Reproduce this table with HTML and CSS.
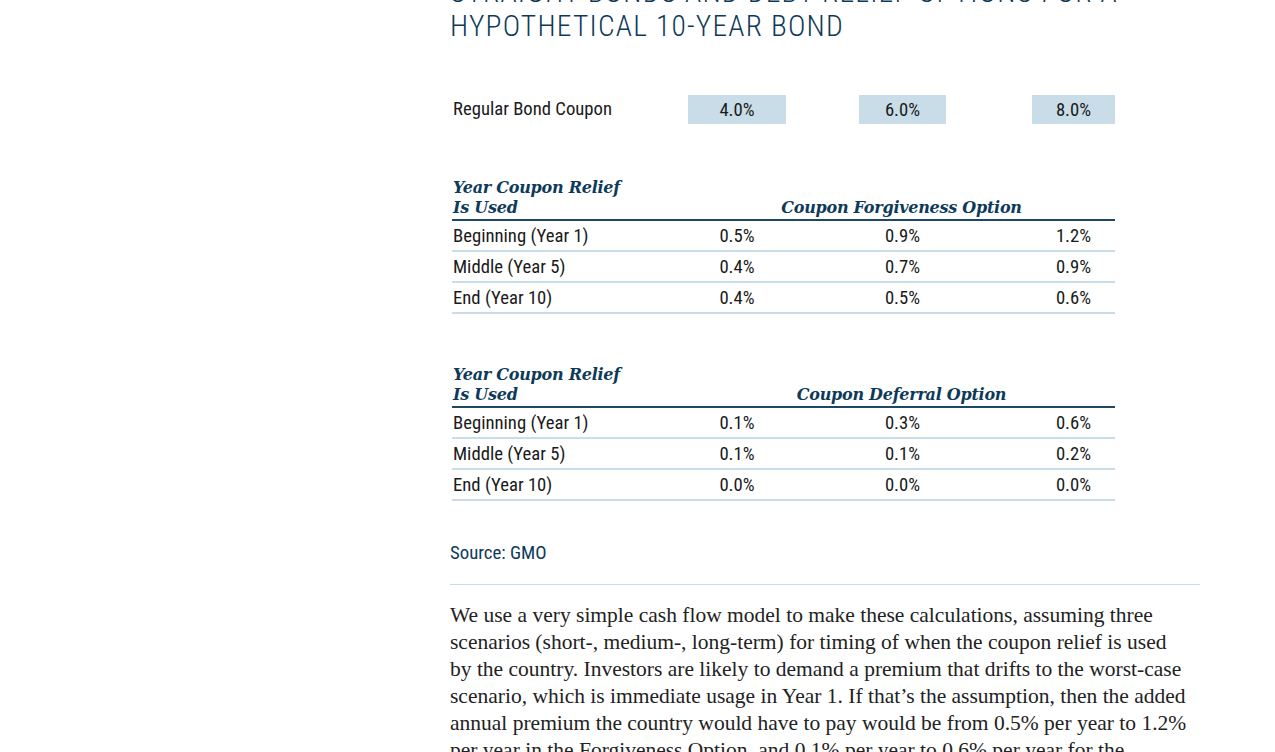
FILE: index.html
```html
<!DOCTYPE html>
<html>
<head>
<meta charset="utf-8">
<link rel="stylesheet" href="styles.css">
</head>
<body>
<main class="col">
  <h2 class="title">Straight Bonds and Debt Relief Options for a Hypothetical 10-Year Bond</h2>

  <div class="grid coupon">
    <div class="lbl">Regular Bond Coupon</div>
    <div class="box c2">4.0%</div>
    <div class="box c4">6.0%</div>
    <div class="box c6">8.0%</div>
  </div>

  <div class="tbl t1">
    <div class="grid head">
      <div class="hl">Year Coupon Relief<br>Is Used</div>
      <div class="hr">Coupon Forgiveness Option</div>
    </div>
    <div class="grid row"><div class="lbl">Beginning (Year 1)</div><div class="c2">0.5%</div><div class="c4">0.9%</div><div class="c6">1.2%</div></div>
    <div class="grid row"><div class="lbl">Middle (Year 5)</div><div class="c2">0.4%</div><div class="c4">0.7%</div><div class="c6">0.9%</div></div>
    <div class="grid row"><div class="lbl">End (Year 10)</div><div class="c2">0.4%</div><div class="c4">0.5%</div><div class="c6">0.6%</div></div>
  </div>

  <div class="tbl t2">
    <div class="grid head">
      <div class="hl">Year Coupon Relief<br>Is Used</div>
      <div class="hr">Coupon Deferral Option</div>
    </div>
    <div class="grid row"><div class="lbl">Beginning (Year 1)</div><div class="c2">0.1%</div><div class="c4">0.3%</div><div class="c6">0.6%</div></div>
    <div class="grid row"><div class="lbl">Middle (Year 5)</div><div class="c2">0.1%</div><div class="c4">0.1%</div><div class="c6">0.2%</div></div>
    <div class="grid row"><div class="lbl">End (Year 10)</div><div class="c2">0.0%</div><div class="c4">0.0%</div><div class="c6">0.0%</div></div>
  </div>

  <p class="source">Source: GMO</p>
  <hr class="rule">
  <p class="body">We use a very simple cash flow model to make these calculations, assuming three scenarios (short-, medium-, long-term) for timing of when the coupon relief is used by the country. Investors are likely to demand a premium that drifts to the worst-case scenario, which is immediate usage in Year 1. If that’s the assumption, then the added annual premium the country would have to pay would be from 0.5% per year to 1.2% per year in the Forgiveness Option, and 0.1% per year to 0.6% per year for the Deferral Option.</p>
</main>
</body>
</html>
```

FILE: styles.css
```css
html, body {
  margin: 0;
  padding: 0;
  background: #ffffff;
  overflow: hidden;
}
.col {
  width: 750px;
  margin-left: 450px;
  font-family: "Roboto Condensed", "Liberation Sans Narrow", "Roboto", sans-serif;
}
.title {
  margin: -25px 0 0 0;
  font-weight: 300;
  font-size: 29.5px;
  line-height: 34px;
  letter-spacing: 1.2px;
  text-transform: uppercase;
  color: #0e3a5a;
  width: 680px;
}
.grid {
  display: grid;
  grid-template-columns: 236px 98px 73px 87px 86px 83px;
  width: 663px;
  margin-left: 2px;
}
.c2 { grid-column: 2; text-align: center; }
.c4 { grid-column: 4; text-align: center; }
.c6 { grid-column: 6; text-align: center; }
.lbl { grid-column: 1; padding-left: 1px; }
.coupon {
  margin-top: 51px;
  font-size: 18.7px;
  color: #1a1a1a;
  align-items: center;
}
.box {
  background: #c8dde8;
  height: 29px;
  line-height: 31px;
}
.coupon .lbl { line-height: 31px; }
.tbl { font-size: 18.7px; color: #1a1a1a; }
.t1 { margin-top: 53px; }
.t2 { margin-top: 51px; }
.head {
  border-bottom: 2px solid #1f4663;
  font-family: "DejaVu Serif", serif;
  font-weight: 700;
  font-style: italic;
  font-size: 16px;
  line-height: 20px;
  color: #0e3a5a;
  padding-bottom: 1px;
}
.hl { grid-column: 1; padding-left: 1px; letter-spacing: -0.25px; }
.hr { grid-column: 2 / 7; text-align: center; align-self: end; letter-spacing: -0.25px; }
.row {
  height: 29px;
  line-height: 31px;
  border-bottom: 2px solid #c9dde8;
}
.source {
  margin: 40px 0 0 0;
  font-size: 18.8px;
  color: #0e3a5a;
  line-height: 24px;
}
.rule {
  margin: 19px 0 0 0;
  border: 0;
  border-top: 1px solid #c9dde8;
  height: 0;
}
.body {
  margin: 17px 0 0 0;
  width: 738px;
  font-family: "Liberation Serif", serif;
  font-size: 21.5px;
  line-height: 27px;
  color: #222222;
}
```
